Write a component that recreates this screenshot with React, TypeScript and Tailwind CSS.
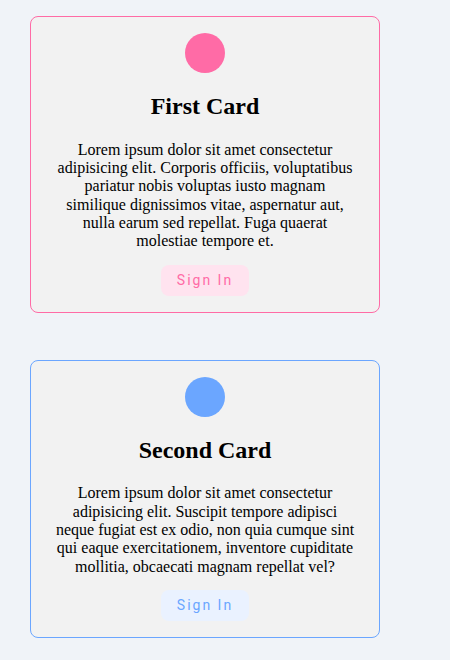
import React from "react";

type CardProps = {
  title: string;
  text: string;
  color: string;
  tint: string;
  border: string;
  btnText: string;
};

function Card({ title, text, color, tint, border, btnText }: CardProps) {
  return (
    <div className={`w-[350px] rounded-lg border bg-[#f2f2f2] px-6 pt-4 pb-4 text-center ${border}`}>
      <div className={`mx-auto h-10 w-10 rounded-full ${color}`} />
      <h2 className="my-5 text-[24px] font-bold leading-[27.6px] text-black">{title}</h2>
      <p className="mb-4 text-[16px] leading-[18.35px] text-black">{text}</p>
      <button
        className={`mt-[-2px] rounded-lg px-4 py-[7px] text-[14px] leading-[17px] tracking-[2px] ${tint} ${btnText}`}
        style={{ fontFamily: "Roboto, sans-serif" }}
      >
        Sign In
      </button>
    </div>
  );
}

export default function App() {
  return (
    <div
      className="min-h-[660px] w-[450px] bg-[#f0f3f8] pl-[30px] pt-4"
      style={{ fontFamily: '"Liberation Serif", "Times New Roman", serif' }}
    >
      <div className="flex flex-col gap-[47px]">
        <Card
          title="First Card"
          text="Lorem ipsum dolor sit amet consectetur adipisicing elit. Corporis officiis, voluptatibus pariatur nobis voluptas iusto magnam similique dignissimos vitae, aspernatur aut, nulla earum sed repellat. Fuga quaerat molestiae tempore et."
          color="bg-[#ff6ba6]"
          tint="bg-[#ffe3ef]"
          border="border-[#ff6ba6]"
          btnText="text-[#ff6ba6]"
        />
        <Card
          title="Second Card"
          text="Lorem ipsum dolor sit amet consectetur adipisicing elit. Suscipit tempore adipisci neque fugiat est ex odio, non quia cumque sint qui eaque exercitationem, inventore cupiditate mollitia, obcaecati magnam repellat vel?"
          color="bg-[#6ba6ff]"
          tint="bg-[#eaf2ff]"
          border="border-[#6ba6ff]"
          btnText="text-[#6ba6ff]"
        />
      </div>
    </div>
  );
}
